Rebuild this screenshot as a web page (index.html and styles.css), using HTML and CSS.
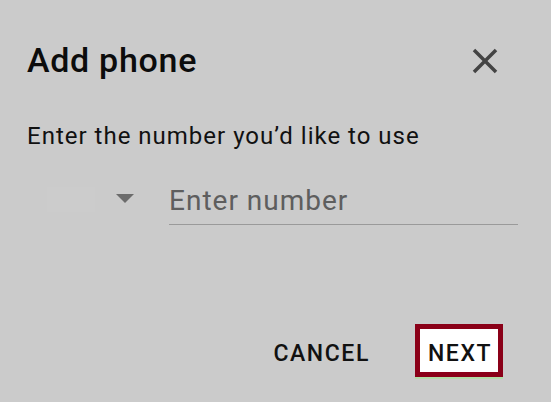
FILE: index.html
```html
<!DOCTYPE html>
<html lang="en">
<head>
<meta charset="utf-8">
<title>Add phone</title>
<link rel="stylesheet" href="styles.css">
</head>
<body>
<div class="dialog">
  <div class="header">
    <h1 class="title">Add phone</h1>
    <button class="close" aria-label="Close">
      <svg viewBox="0 0 24 24" width="42" height="42"><path d="M19 6.41L17.59 5 12 10.59 6.41 5 5 6.41 10.59 12 5 17.59 6.41 19 12 13.41 17.59 19 19 17.59 13.41 12z" fill="#444"/></svg>
    </button>
  </div>
  <p class="desc">Enter the number you’d like to use</p>
  <div class="phone-row">
    <div class="country">
      <span class="flag"></span>
      <span class="caret"></span>
    </div>
    <div class="number">
      <span class="placeholder">Enter number</span>
    </div>
  </div>
  <div class="actions">
    <button class="btn cancel">CANCEL</button>
    <button class="btn next">NEXT</button>
  </div>
</div>
</body>
</html>
```
FILE: styles.css
```css
html, body {
  margin: 0;
  padding: 0;
  background: #cbcbcb;
  font-family: Roboto, "Noto Sans", sans-serif;
  color: #111;
}

.dialog {
  width: 551px;
  height: 402px;
  box-sizing: border-box;
  padding: 40px 0 0 27px;
  display: flex;
  flex-direction: column;
}

.header {
  display: flex;
  align-items: flex-start;
  justify-content: space-between;
  height: 40px;
  padding-right: 45px;
}

.title {
  margin: 0;
  font-size: 34px;
  line-height: 40px;
  font-weight: 500;
  letter-spacing: 0.7px;
  color: #0c0c0c;
}

.close {
  border: 0;
  padding: 0;
  margin: 0;
  background: transparent;
  width: 42px;
  height: 42px;
  display: block;
}

.close svg {
  display: block;
}

.desc {
  margin: 42px 0 0 0;
  font-size: 24px;
  line-height: 28px;
  letter-spacing: 1px;
  color: #111;
}

.phone-row {
  display: flex;
  align-items: flex-start;
  margin-top: 34px;
  padding-left: 20px;
}

.country {
  display: flex;
  align-items: flex-start;
}

.flag {
  display: block;
  width: 48px;
  height: 25px;
  margin-top: 3px;
  background: #cccccc;
}

.caret {
  display: block;
  width: 0;
  height: 0;
  margin-top: 10px;
  margin-left: 21px;
  border-left: 9.5px solid transparent;
  border-right: 9.5px solid transparent;
  border-top: 9px solid #6c6c6c;
}

.number {
  margin-left: 35px;
  width: 349px;
  border-bottom: 1px solid #9a9a9a;
  padding-bottom: 6px;
}

.placeholder {
  display: block;
  font-size: 28px;
  line-height: 34px;
  letter-spacing: 1px;
  color: #5e5e5e;
}

.actions {
  display: flex;
  justify-content: flex-end;
  align-items: center;
  margin-top: 99px;
  padding-right: 48px;
  gap: 45px;
}

.btn {
  font-family: Roboto, "Noto Sans", sans-serif;
  font-weight: 500;
  font-size: 23px;
  letter-spacing: 1.6px;
  line-height: 24px;
  border: 0;
  background: transparent;
  color: #111;
  padding: 6px 0 0 0;
  margin: 0;
}

.next {
  width: 88px;
  height: 53px;
  box-sizing: border-box;
  border: 5px solid #8a0018;
  background: #fff;
  padding: 6px 0 0 2px;
  box-shadow: 0 2px 0 #b2dca8;
}
```
